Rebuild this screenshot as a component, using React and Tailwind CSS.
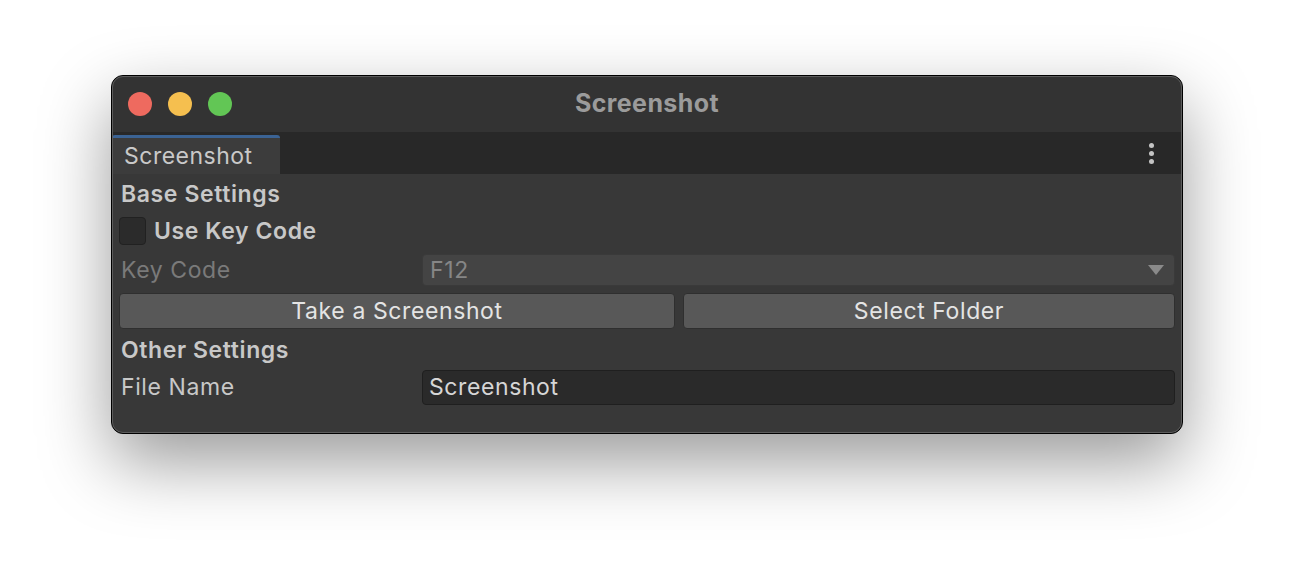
import React from 'react';

const labelCol = 'w-[303px] shrink-0';

const Window = () => {
  return (
    <div className="relative w-[1072px] h-[359px] rounded-[12px] border border-black bg-[#383838] shadow-[0_28px_70px_rgba(0,0,0,0.4)] overflow-hidden flex flex-col">
      <div className="h-[56px] shrink-0 bg-[#333333] relative flex items-center">
        <div className="flex items-center gap-[16px] pl-[16px]">
          <span className="w-[24px] h-[24px] rounded-full bg-[#ee6a5f]" />
          <span className="w-[24px] h-[24px] rounded-full bg-[#f5bf4f]" />
          <span className="w-[24px] h-[24px] rounded-full bg-[#62c655]" />
        </div>
        <div className="absolute inset-0 flex items-center justify-center text-[25px] font-bold tracking-[0.4px] text-[#9b9b9b] pointer-events-none">
          Screenshot
        </div>
      </div>
      <div className="h-[42px] shrink-0 bg-[#282828] flex items-end justify-between">
        <div className="w-[168px] h-[39px] bg-[#3c3c3c] border-t-[3px] border-[#3b6394] rounded-t-[3px] flex items-center pl-[12px] text-[23px] tracking-[0.5px] text-[#c9c9c9]">
          Screenshot
        </div>
        <div className="h-[42px] flex flex-col items-center justify-center gap-[3px] pr-[28px]">
          <span className="w-[5px] h-[5px] rounded-full bg-[#c4c4c4]" />
          <span className="w-[5px] h-[5px] rounded-full bg-[#c4c4c4]" />
          <span className="w-[5px] h-[5px] rounded-full bg-[#c4c4c4]" />
        </div>
      </div>
      <div className="flex flex-col px-[7px] pt-[3px] text-[23px] tracking-[0.6px] text-[#c8c8c8]">
        <div className="h-[34px] flex items-center pl-[2px] font-semibold">Base Settings</div>
        <div className="h-[40px] flex items-center">
          <span className="w-[27px] h-[28px] rounded-[4px] bg-[#2b2b2b] border border-[#212121]" />
          <span className="ml-[8px] font-semibold">Use Key Code</span>
        </div>
        <div className="h-[38px] flex items-center">
          <div className={`${labelCol} pl-[2px] text-[#7a7a7a]`}>Key Code</div>
          <div className="flex-1 h-[32px] rounded-[4px] bg-[#444444] border border-[#3a3a3a] flex items-center justify-between pl-[7px] pr-[10px] text-[#868686]">
            <span>F12</span>
            <svg width="16" height="10" viewBox="0 0 16 10"><path d="M0 0h16L8 10z" fill="#8a8a8a" /></svg>
          </div>
        </div>
        <div className="h-[43px] flex items-center gap-[8px]">
          <button className="flex-1 h-[36px] rounded-[4px] bg-[#585858] border border-[#2f2f2f] text-[#e4e4e4]">Take a Screenshot</button>
          <button className="w-[492px] h-[36px] rounded-[4px] bg-[#585858] border border-[#2f2f2f] text-[#e4e4e4]">Select Folder</button>
        </div>
        <div className="h-[36px] flex items-center pl-[2px] font-semibold">Other Settings</div>
        <div className="h-[38px] flex items-center">
          <div className={`${labelCol} pl-[2px]`}>File Name</div>
          <div className="flex-1 h-[35px] rounded-[4px] bg-[#2a2a2a] border border-[#1f1f1f] flex items-center pl-[6px] text-[#d6d6d6]">
            Screenshot
          </div>
        </div>
      </div>
      <div className="absolute inset-0 rounded-[11px] border border-[#5c5c5c] pointer-events-none" />
    </div>
  );
};

export default function App() {
  return (
    <div className="w-[1294px] h-[582px] bg-white pl-[111px] pt-[75px] font-['Inter',sans-serif]">
      <Window />
    </div>
  );
}
